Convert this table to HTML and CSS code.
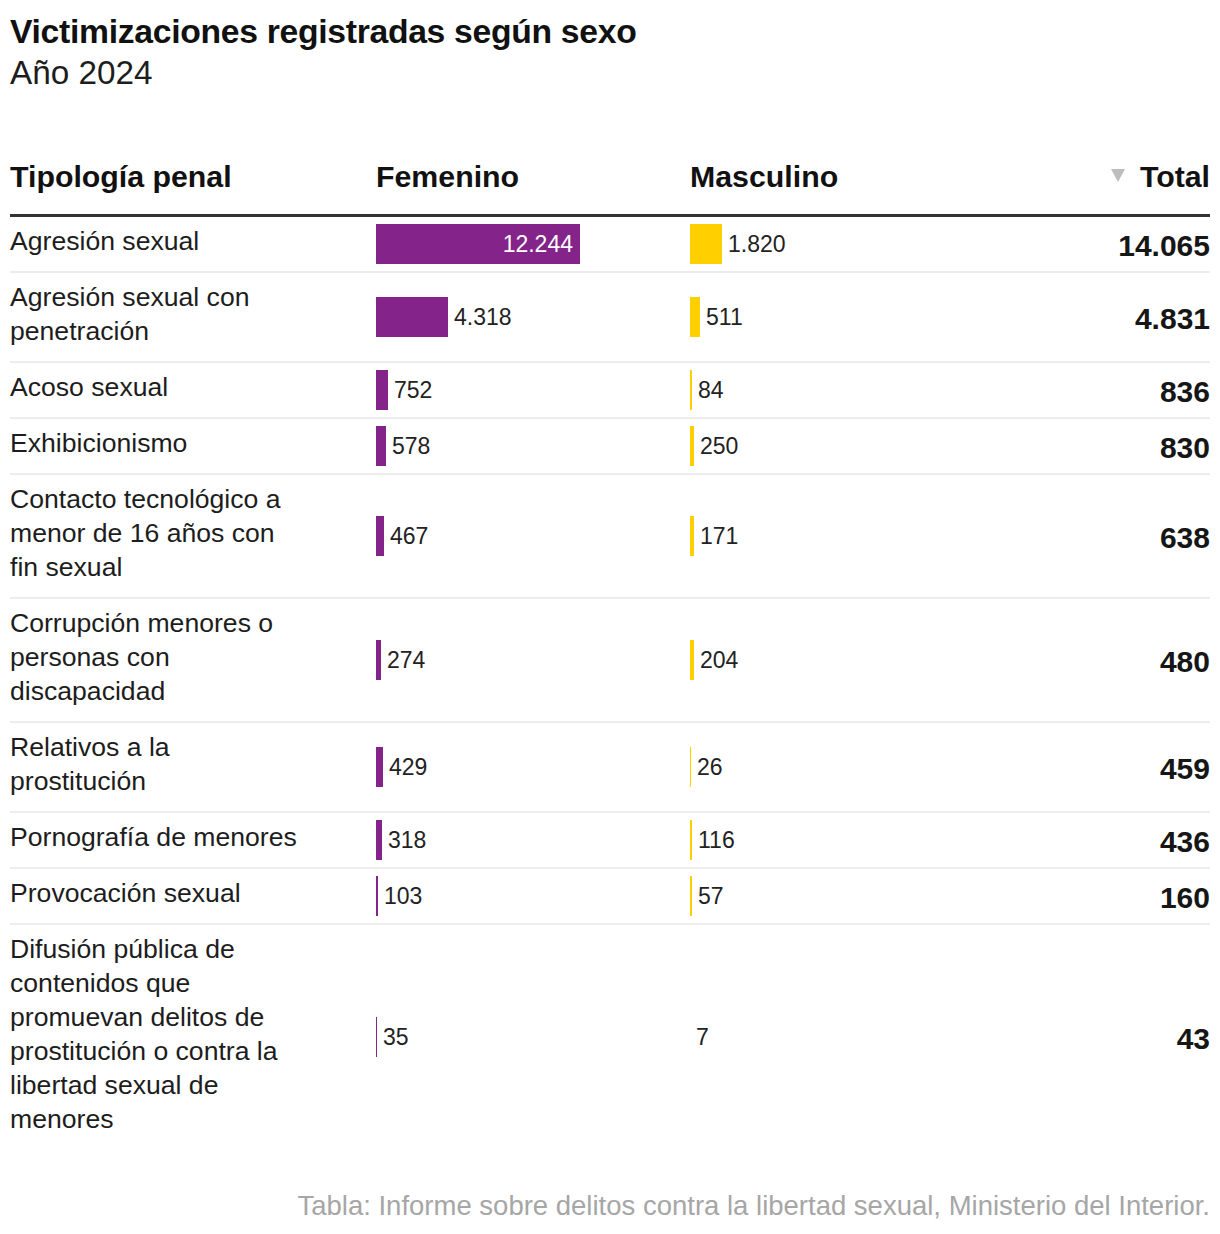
FILE: index.html
```html
<!DOCTYPE html>
<html lang="es">
<head>
<meta charset="utf-8">
<title>Victimizaciones registradas según sexo</title>
<link rel="stylesheet" href="styles.css">
</head>
<body>
<div class="page">
  <header class="head">
    <h1 class="title">Victimizaciones registradas según sexo</h1>
    <p class="subtitle">Año 2024</p>
  </header>

  <table class="data">
    <colgroup>
      <col class="c-label">
      <col class="c-fem">
      <col class="c-masc">
      <col class="c-total">
    </colgroup>
    <thead>
      <tr>
        <th class="th-label">Tipología penal</th>
        <th class="th-fem">Femenino</th>
        <th class="th-masc">Masculino</th>
        <th class="th-total"><span class="sort"><svg class="tri" width="14" height="13" viewBox="0 0 14 13"><polygon points="0,0 14,0 7,13" fill="#bdbdbd"/></svg>Total</span></th>
      </tr>
    </thead>
    <tbody>
      <tr>
        <td class="label">Agresión sexual</td>
        <td><div class="bw"><span class="bar fem inside" style="width:204px"><span class="val val-in">12.244</span></span></div></td>
        <td><div class="bw"><span class="bar masc" style="width:32px"></span><span class="val">1.820</span></div></td>
        <td class="total">14.065</td>
      </tr>
      <tr>
        <td class="label">Agresión sexual con penetración</td>
        <td><div class="bw"><span class="bar fem" style="width:72px"></span><span class="val">4.318</span></div></td>
        <td><div class="bw"><span class="bar masc" style="width:10px"></span><span class="val">511</span></div></td>
        <td class="total">4.831</td>
      </tr>
      <tr>
        <td class="label">Acoso sexual</td>
        <td><div class="bw"><span class="bar fem" style="width:12px"></span><span class="val">752</span></div></td>
        <td><div class="bw"><span class="bar masc" style="width:2px"></span><span class="val">84</span></div></td>
        <td class="total">836</td>
      </tr>
      <tr>
        <td class="label">Exhibicionismo</td>
        <td><div class="bw"><span class="bar fem" style="width:10px"></span><span class="val">578</span></div></td>
        <td><div class="bw"><span class="bar masc" style="width:4px"></span><span class="val">250</span></div></td>
        <td class="total">830</td>
      </tr>
      <tr>
        <td class="label">Contacto tecnológico a menor de 16 años con fin sexual</td>
        <td><div class="bw"><span class="bar fem" style="width:8px"></span><span class="val">467</span></div></td>
        <td><div class="bw"><span class="bar masc" style="width:4px"></span><span class="val">171</span></div></td>
        <td class="total">638</td>
      </tr>
      <tr>
        <td class="label">Corrupción menores o personas con discapacidad</td>
        <td><div class="bw"><span class="bar fem" style="width:5px"></span><span class="val">274</span></div></td>
        <td><div class="bw"><span class="bar masc" style="width:4px"></span><span class="val">204</span></div></td>
        <td class="total">480</td>
      </tr>
      <tr>
        <td class="label">Relativos a la prostitución</td>
        <td><div class="bw"><span class="bar fem" style="width:7px"></span><span class="val">429</span></div></td>
        <td><div class="bw"><span class="bar masc" style="width:1px"></span><span class="val">26</span></div></td>
        <td class="total">459</td>
      </tr>
      <tr>
        <td class="label">Pornografía de menores</td>
        <td><div class="bw"><span class="bar fem" style="width:6px"></span><span class="val">318</span></div></td>
        <td><div class="bw"><span class="bar masc" style="width:2px"></span><span class="val">116</span></div></td>
        <td class="total">436</td>
      </tr>
      <tr>
        <td class="label">Provocación sexual</td>
        <td><div class="bw"><span class="bar fem" style="width:2px"></span><span class="val">103</span></div></td>
        <td><div class="bw"><span class="bar masc" style="width:2px"></span><span class="val">57</span></div></td>
        <td class="total">160</td>
      </tr>
      <tr class="last">
        <td class="label">Difusión pública de contenidos que promuevan delitos de prostitución o contra la libertad sexual de menores</td>
        <td><div class="bw"><span class="bar fem" style="width:1px"></span><span class="val">35</span></div></td>
        <td><div class="bw"><span class="bar masc" style="width:0px"></span><span class="val">7</span></div></td>
        <td class="total">43</td>
      </tr>
    </tbody>
  </table>

  <footer class="source">Tabla: Informe sobre delitos contra la libertad sexual, Ministerio del Interior.</footer>
</div>
</body>
</html>
```

FILE: styles.css
```css
* { box-sizing: border-box; }

html, body {
  margin: 0;
  padding: 0;
  background: #ffffff;
}

body {
  font-family: "Liberation Sans", Arial, sans-serif;
  color: #1d1d1d;
}

.page {
  width: 1220px;
  padding: 11px 10px 0 10px;
}

.head {
  display: flex;
  flex-direction: column;
  gap: 2px;
}

.title {
  margin: 0;
  font-size: 33.7px;
  line-height: 40px;
  font-weight: 700;
  color: #111;
  letter-spacing: -0.3px;
}

.subtitle {
  margin: 0;
  font-size: 33.3px;
  line-height: 40px;
  font-weight: 400;
  color: #1d1d1d;
}

.data {
  width: 1200px;
  margin-top: 52px;
  border-collapse: collapse;
  table-layout: fixed;
}

.c-label { width: 366px; }
.c-fem { width: 314px; }
.c-masc { width: 314px; }
.c-total { width: 206px; }

.data th {
  text-align: left;
  font-size: 30.3px;
  line-height: 34px;
  font-weight: 700;
  color: #111;
  padding: 10px 0 20px 0;
  border-bottom: 3.5px solid #333333;
  vertical-align: bottom;
}

.data th.th-total {
  text-align: right;
}

.sort {
  display: inline-flex;
  align-items: center;
  gap: 15px;
}

.tri {
  display: block;
  margin-top: -2px;
}

.data td {
  padding: 10px 0;
  border-bottom: 2px solid #ededed;
  vertical-align: middle;
}

.data tr.last td {
  border-bottom: none;
}

.data td.label {
  font-size: 26.6px;
  line-height: 34px;
  padding: 7px 76px 13px 0;
  color: #1d1d1d;
}

.bw {
  display: flex;
  align-items: center;
  height: 40px;
  margin: -3px 0;
}

.bar {
  display: block;
  height: 40px;
  flex: none;
}

.bar.fem { background: #84248a; }
.bar.masc { background: #ffcf00; }

.bar.inside {
  display: flex;
  align-items: center;
  justify-content: flex-end;
  padding-right: 7px;
}

.val {
  font-size: 23px;
  line-height: 40px;
  color: #222;
  margin-left: 6px;
}

.val-in {
  color: #ffffff;
  margin-left: 0;
}

.data td.total {
  text-align: right;
  font-size: 30px;
  line-height: 34px;
  font-weight: 700;
  color: #161616;
  padding-top: 12px;
  padding-bottom: 8px;
}

.source {
  margin-top: 40px;
  text-align: right;
  font-size: 27.5px;
  line-height: 34px;
  color: #a6a6a6;
}
```
